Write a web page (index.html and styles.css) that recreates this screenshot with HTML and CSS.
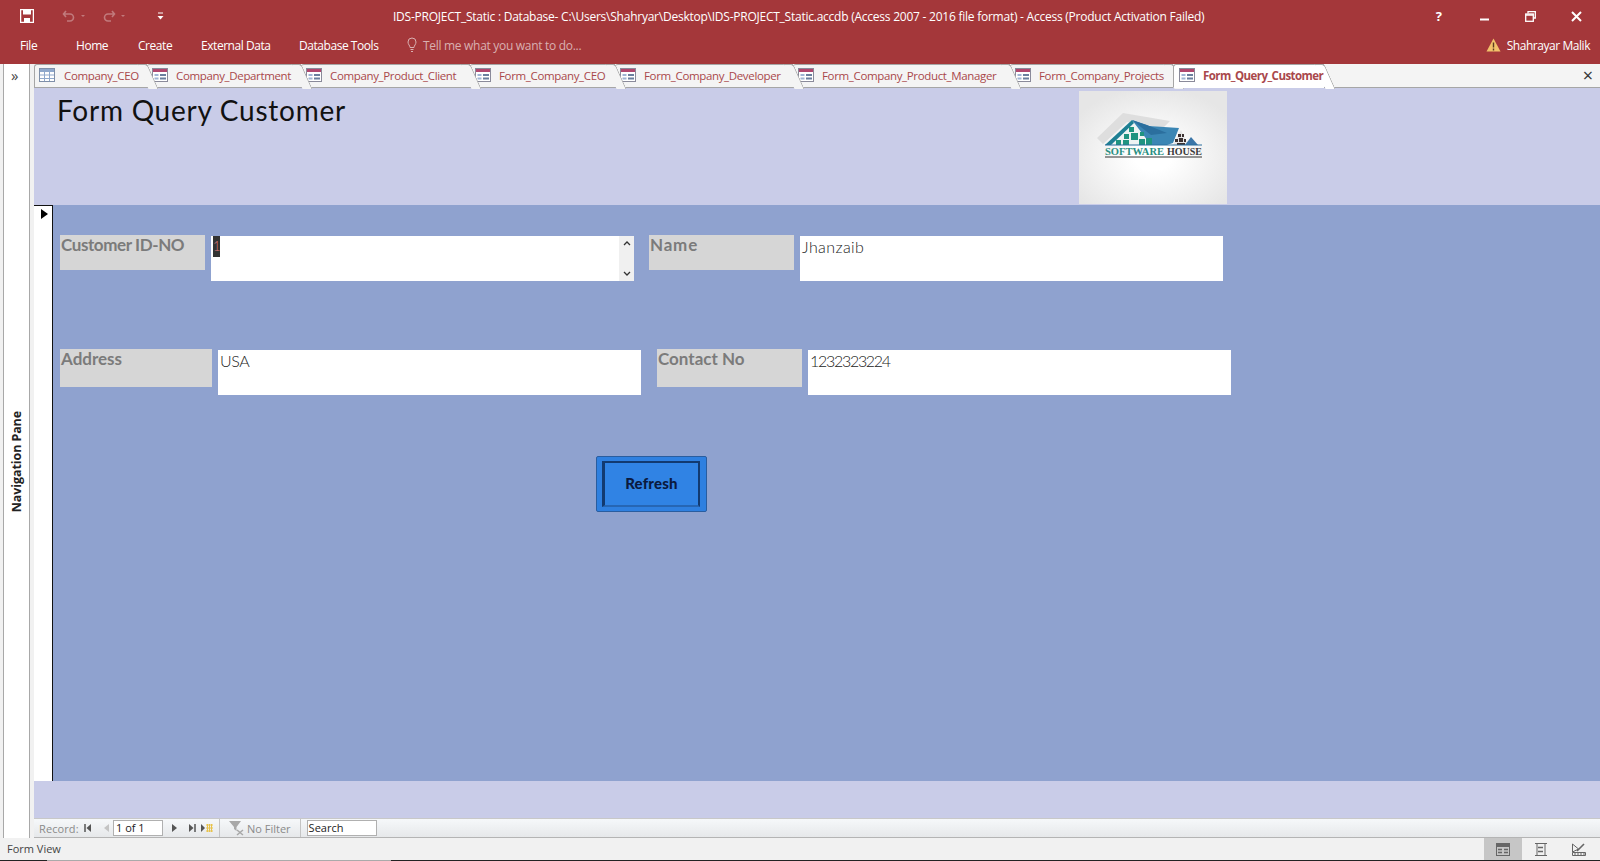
FILE: index.html
```html
<!DOCTYPE html>
<html lang="en">
<head>
<meta charset="utf-8">
<title>Form Query Customer</title>
<link rel="stylesheet" href="styles.css">
</head>
<body>
<svg class="defs" width="0" height="0" aria-hidden="true">
  <symbol id="i-form" viewBox="0 0 16 14">
    <rect x="0.5" y="0.5" width="15" height="13" fill="#fff" stroke="#8a8a9a"/>
    <rect x="1" y="1" width="14" height="3" fill="#b0476e"/>
    <rect x="2.5" y="6" width="4" height="2" fill="#9fb4d4"/>
    <rect x="2.5" y="9.5" width="4" height="2" fill="#9fb4d4"/>
    <rect x="8" y="6" width="6" height="2" fill="#6b7f9e"/>
    <rect x="8" y="9.5" width="6" height="2" fill="#6b7f9e"/>
  </symbol>
  <symbol id="i-table" viewBox="0 0 16 14">
    <rect x="0.5" y="0.5" width="15" height="13" fill="#fff" stroke="#7f8fa8"/>
    <rect x="1" y="1" width="14" height="3" fill="#8fa8cc"/>
    <path d="M1 7h14M1 10.500h14M5.500 1v12M10.500 1v12" stroke="#8fa8cc" fill="none"/>
  </symbol>
</svg>

<header class="ribbon">
  <div class="title-row">
    <div class="qat">
      <svg class="save" width="14" height="14" viewBox="0 0 14 14"><path d="M0.500 0.500h13v13h-13z" fill="none" stroke="#fff" stroke-width="1.500"/><rect x="3" y="1" width="8" height="4.500" fill="#fff"/><rect x="4" y="9" width="6" height="4.500" fill="#fff"/></svg>
      <svg class="undo" width="14" height="12" viewBox="0 0 14 12"><path d="M4 1 1.500 4 4 7M2 4h6a3.500 3.500 0 0 1 0 7H5" fill="none" stroke="#c17a7c" stroke-width="1.600"/></svg>
      <span class="tiny-caret"></span>
      <svg class="redo" width="14" height="12" viewBox="0 0 14 12"><path d="M10 1l2.500 3L10 7M12 4H6a3.500 3.500 0 0 0 0 7h3" fill="none" stroke="#c17a7c" stroke-width="1.600"/></svg>
      <span class="tiny-caret"></span>
      <svg class="qat-more" width="7" height="8" viewBox="0 0 7 8"><path d="M1 1h5" stroke="#fff"/><path d="M0.500 4h6L3.500 7.500z" fill="#fff"/></svg>
    </div>
    <div class="doc-title">IDS-PROJECT_Static : Database- C:\Users\Shahryar\Desktop\IDS-PROJECT_Static.accdb (Access 2007 - 2016 file format) - Access (Product Activation Failed)</div>
    <div class="win-controls">
      <span class="help">?</span>
      <svg width="10" height="10" viewBox="0 0 10 10"><path d="M0 8.500h9" stroke="#fff" stroke-width="2"/></svg>
      <svg class="win-restore" width="11" height="11" viewBox="0 0 11 11"><path d="M3 2.500V.7h7.300V7H8.500" fill="none" stroke="#fff" stroke-width="1.300"/><rect x="0.700" y="3" width="7.600" height="7.300" fill="none" stroke="#fff" stroke-width="1.300"/><path d="M1 4h7" stroke="#fff" stroke-width="1.500"/></svg>
      <svg class="win-close" width="11" height="11" viewBox="0 0 11 11"><path d="M1 1l9 9M10 1l-9 9" stroke="#fff" stroke-width="2"/></svg>
    </div>
  </div>
  <nav class="menu-row">
    <span class="file">File</span>
    <span class="menu-home">Home</span>
    <span class="menu-item">Create</span>
    <span class="menu-item">External Data</span>
    <span class="menu-item">Database Tools</span>
    <svg class="bulb" width="10" height="16" viewBox="0 0 10 16"><path d="M3 10.500C3 8.500 1 7.500 1 5a4 4 0 0 1 8 0c0 2.500-2 3.500-2 5.500z M3.500 12.500h3M4 14.500h2" fill="none" stroke="#d9b0b1" stroke-width="1"/></svg>
    <span class="tell">Tell me what you want to do...</span>
    <span class="user">
      <svg width="15" height="14" viewBox="0 0 15 14"><path d="M7.500 0.500 14.500 13.500H.5z" fill="#f2c26b"/><path d="M7.500 4.500v5M7.500 10.500v2" stroke="#5a3a20" stroke-width="1.400"/></svg>
      Shahrayar Malik
    </span>
  </nav>
</header>

<div class="workspace">
  <aside class="nav-pane">
    <div class="nav-inner">
      <span class="nav-chev">»</span>
      <span class="nav-label">Navigation Pane</span>
    </div>
  </aside>
  <main class="doc">
    <div class="tabs">
      <div class="tab w1"><svg class="tab-ico"><use href="#i-table"/></svg>Company_CEO</div>
      <div class="tab w2"><svg class="tab-ico"><use href="#i-form"/></svg>Company_Department</div>
      <div class="tab w3"><svg class="tab-ico"><use href="#i-form"/></svg>Company_Product_Client</div>
      <div class="tab w4"><svg class="tab-ico"><use href="#i-form"/></svg>Form_Company_CEO</div>
      <div class="tab w5"><svg class="tab-ico"><use href="#i-form"/></svg>Form_Company_Developer</div>
      <div class="tab w6"><svg class="tab-ico"><use href="#i-form"/></svg>Form_Company_Product_Manager</div>
      <div class="tab w7"><svg class="tab-ico"><use href="#i-form"/></svg>Form_Company_Projects</div>
      <div class="tab w8 active"><svg class="tab-ico"><use href="#i-form"/></svg>Form_Query_Customer</div>
      <span class="tab-close">×</span>
    </div>

    <section class="form-header">
      <h1>Form Query Customer</h1>
      <svg class="logo" width="148" height="113" viewBox="0 0 148 113">
        <defs>
          <radialGradient id="logo-bg" cx="50%" cy="58%" r="62%">
            <stop offset="0.200" stop-color="#ffffff"/>
            <stop offset="1" stop-color="#e6e6e6"/>
          </radialGradient>
        </defs>
        <rect width="148" height="113" fill="url(#logo-bg)"/>
        <path d="M18 47 44 22 91 30 84 37 48 31 24 53z" fill="#dedede"/>
        <path d="M26 54 53 29 84 54z" fill="#eef3f3"/>
        <path d="M53 29 70 35 100 37 94 52 88 54 72 54z" fill="#3b86b4"/>
        <path d="M53 29 68 34 88 42 72 44z" fill="#2b6f9e"/>
        <path d="M26 54 53 29 55 32 32 54z" fill="#1e7f93"/>
        <g fill="#1f9480">
          <rect x="50" y="36" width="5" height="5"/><rect x="45" y="43" width="5" height="5"/><rect x="52" y="42" width="7" height="7"/>
          <rect x="61" y="41" width="4" height="4"/><rect x="37" y="49" width="5" height="5"/><rect x="44" y="49" width="6" height="5"/>
          <rect x="60" y="48" width="6" height="6"/><rect x="67" y="47" width="6" height="7"/>
        </g>
        <path d="M94 54 102 39 109 54z" fill="#e6e6e6"/>
        <g fill="#3c3232">
          <rect x="99" y="43" width="3" height="3"/><rect x="103" y="43" width="2" height="3"/><rect x="96" y="48" width="3" height="3"/>
          <rect x="100" y="47" width="4" height="4"/><rect x="105" y="48" width="2" height="3"/><rect x="98" y="52" width="8" height="2"/>
        </g>
        <path d="M106 54 112 46 119 54z" fill="#3b76a8"/>
        <path d="M26 54H123" stroke="#2b6f9e"/>
        <text class="logo-a" x="26" y="64" textLength="59" lengthAdjust="spacingAndGlyphs">SOFTWARE</text>
        <text class="logo-b" x="88" y="64" textLength="35" lengthAdjust="spacingAndGlyphs">HOUSE</text>
        <path d="M26 66H123" stroke="#333" stroke-width="1"/>
      </svg>
    </section>

    <section class="detail">
      <div class="selector"><span class="selector-arrow"></span></div>
      <div class="detail-body">
        <div class="field-row row-a">
          <label class="cap cap-a cap-id">Customer ID-NO</label>
          <div class="box box-id">
            <span class="sel">1</span>
            <span class="scroll">
              <svg width="8" height="5" viewBox="0 0 8 5"><path d="M1 4l3-3 3 3" fill="none" stroke="#333" stroke-width="1.300"/></svg>
              <svg width="8" height="5" viewBox="0 0 8 5"><path d="M1 1l3 3 3-3" fill="none" stroke="#333" stroke-width="1.300"/></svg>
            </span>
          </div>
          <label class="cap cap-a name-cap cap-name">Name</label>
          <div class="box box-name">Jhanzaib</div>
        </div>
        <div class="field-row row-b">
          <label class="cap cap-b">Address</label>
          <div class="box box-usa">USA</div>
          <label class="cap cap-a name-cap">Contact No</label>
          <div class="box box-num">1232323224</div>
        </div>
        <button class="refresh" type="button"><span>Refresh</span></button>
      </div>
    </section>

    <section class="form-footer"></section>

    <div class="recnav">
      <span class="rec-label">Record:</span>
      <svg class="r-first" width="8" height="8" viewBox="0 0 8 8"><path d="M1 0v8" stroke="#555" stroke-width="1.500"/><path d="M7 0v8L2.500 4z" fill="#555"/></svg>
      <svg class="r-prev" width="5" height="8" viewBox="0 0 5 8"><path d="M5 0v8L0 4z" fill="#c4c4c4"/></svg>
      <span class="rec-input">1 of 1</span>
      <svg class="r-next" width="5" height="8" viewBox="0 0 5 8"><path d="M0 0v8l5-4z" fill="#555"/></svg>
      <svg class="r-last" width="8" height="8" viewBox="0 0 8 8"><path d="M1 0v8l4.500-4z" fill="#555"/><path d="M7 0v8" stroke="#555" stroke-width="1.500"/></svg>
      <svg class="r-new" width="12" height="8" viewBox="0 0 12 8"><path d="M0 0v8l4-4z" fill="#555"/><path d="M5 1h7M5 4h7M5 7h7M6.500 0v8M8.500 0v8M10.500 0v8" stroke="#e8c24a" stroke-width="1"/></svg>
      <span class="rec-sep sep-a"></span>
      <svg class="r-filter" width="16" height="15" viewBox="0 0 16 15"><path d="M0 0h12L7.500 6v4L5 8V6z" fill="#a8a8a8"/><path d="M8 9l6 5M14 9l-6 5" stroke="#a8a8a8" stroke-width="1.500"/></svg>
      <span class="no-filter">No Filter</span>
      <span class="rec-sep sep-b"></span>
      <span class="rec-search">Search</span>
    </div>
  </main>
</div>

<footer class="status">
  <span>Form View</span>
  <div class="views">
    <span class="view on"><svg width="14" height="13" viewBox="0 0 14 13"><rect x="0.500" y="0.500" width="13" height="12" fill="none" stroke="#666"/><rect x="1" y="1" width="12" height="3" fill="#666"/><path d="M2 6.500h4M8 6.500h4M2 9.500h4M8 9.500h4" stroke="#666" stroke-width="1.500"/></svg></span>
    <span class="view"><svg width="12" height="13" viewBox="0 0 12 13"><path d="M0 .5h12M0 12.500h12M2 .5v12M10 .5v12" stroke="#666" fill="none"/><path d="M3 4.500h5M3 8.500h5" stroke="#666" stroke-width="1.600"/></svg></span>
    <span class="view"><svg width="14" height="13" viewBox="0 0 14 13"><path d="M0.500 1v8l6-3z" fill="none" stroke="#666"/><path d="M5 8l7-7" stroke="#666" stroke-width="1.600"/><path d="M.5 9.500h13v3H.5zM3 10v2M6 10v2M9 10v2M12 10v2" fill="none" stroke="#666"/></svg></span>
  </div>
</footer>
</body>
</html>
```

FILE: styles.css
```css
* { box-sizing: border-box; }
html, body { height: 100%; }
body {
  margin: 0;
  height: 861px;
  overflow: hidden;
  display: flex;
  flex-direction: column;
  font-family: "Open Sans", "Liberation Sans", sans-serif;
  background: #f1f1f1;
}
.defs { position: absolute; }

/* ribbon */
.ribbon { height: 64px; flex: none; background: #a4373a; color: #fff; font-size: 12px; }
.title-row { height: 32px; display: flex; align-items: center; }
.qat { width: 393px; flex: none; display: flex; align-items: center; padding-left: 20px; }
.undo { margin-left: 28px; }
.redo { margin-left: 17px; }
.tiny-caret { width: 0; height: 0; margin-left: 5px; border: 2.500px solid transparent; border-top-color: #c17a7c; border-bottom: 0; }
.qat-more { margin-left: 32px; }
.doc-title { font-size: 12px; letter-spacing: -0.240px; white-space: nowrap; width: 830px; }
.win-controls { margin-left: auto; display: flex; align-items: center; gap: 36px; padding-right: 18px; }
.help { font-weight: 700; font-size: 13px; margin-right: 2px; }
.win-restore { margin-left: -1px; }
.win-close { margin-left: -1px; }
.menu-row { height: 32px; display: flex; align-items: center; padding: 0 10px 0 20px; position: relative; top: -3px; letter-spacing: -0.450px; }
.file { width: 56px; }
.menu-home { width: 62px; }
.menu-item:nth-of-type(3) { width: 63px; }
.menu-item:nth-of-type(4) { width: 98px; }
.menu-item:nth-of-type(5) { width: 108px; }
.bulb { flex: none; margin-right: 6px; }
.tell { color: #d9b0b1; letter-spacing: -0.300px; }
.user { margin-left: auto; display: flex; align-items: center; gap: 6px; }

/* workspace */
.workspace { flex: 1; display: flex; min-height: 0; }
.nav-pane { width: 34px; flex: none; padding-left: 3px; background: #f1f1f1; }
.nav-inner {
  width: 27px;
  height: 100%;
  background: #fff;
  border-left: 1px solid #a8a8a8;
  border-right: 1px solid #a8a8a8;
  position: relative;
  display: flex;
  justify-content: center;
  align-items: center;
  padding-top: 21px;
}
.nav-chev { position: absolute; top: 3px; left: 7px; font-size: 15px; line-height: 16px; color: #444; }
.nav-label { writing-mode: vertical-rl; transform: rotate(180deg); font-weight: 700; font-size: 12.500px; letter-spacing: -0.100px; color: #222; }
.doc { flex: 1; min-width: 0; display: flex; flex-direction: column; }

/* tabs */
.tabs { height: 24px; flex: none; display: flex; background: #f4f4f4; border-bottom: 1px solid #a6a6a6; position: relative; }
.tab { height: 24px; display: flex; align-items: center; padding: 0 0 2px 5px; gap: 8px; color: #a9484b; font-size: 11.500px; letter-spacing: -0.350px; white-space: nowrap; position: relative; background: #f4f4f4; border-top: 1px solid #a6a6a6; border-radius: 3px 0 0 0; border-bottom: 1px solid #a6a6a6; }
.tab::after { content: ""; position: absolute; top: -1px; right: -6px; width: 9px; height: 24px; border-right: 1px solid #a6a6a6; border-top: 1px solid #a6a6a6; transform: skewX(24deg); background: #f4f4f4; z-index: -1; border-radius: 0 3px 0 0; }
.tab.active { font-weight: 700; letter-spacing: -0.550px; background: #fff; border-bottom-color: #fff; border-left: 1px solid #a6a6a6; z-index: 9; }
.tab.active::after { background: #fff; }
.tab-ico { width: 16px; height: 14px; flex: none; }
.w1 { width: 113px; border-left: 1px solid #a6a6a6; z-index: 8; padding-left: 4px; gap: 9px; }
.w2 { width: 154px; z-index: 7; }
.w3 { width: 169px; z-index: 6; }
.w4 { width: 145px; z-index: 5; }
.w5 { width: 178px; z-index: 4; }
.w6 { width: 217px; z-index: 3; }
.w7 { width: 163px; z-index: 2; }
.w8 { width: 151px; }
.tab-close { position: absolute; right: 7px; top: 0; font-size: 18px; line-height: 22px; color: #333; }

/* form */
.form-header { height: 117px; flex: none; background: #c9cce8; display: flex; align-items: flex-start; padding: 3px 0 0 23px; }
.form-header h1 { margin: 0; width: 1022px; flex: none; font-family: "Lato", sans-serif; font-weight: 400; font-size: 28px; line-height: 38px; letter-spacing: 0.750px; color: #111; }
.logo { flex: none; display: block; }
.logo-a, .logo-b { font-family: "Liberation Serif", serif; font-weight: 700; font-size: 11px; }
.logo-a { fill: #2a8f82; }
.logo-b { fill: #3b3b3b; }

.detail { height: 576px; flex: none; display: flex; background: #8fa2cf; }
.selector { width: 19px; flex: none; background: #fff; border-top: 1px solid #111; border-right: 1px solid #111; padding: 3px 0 0 7px; }
.selector-arrow { display: block; width: 0; height: 0; border-left: 7px solid #000; border-top: 5px solid transparent; border-bottom: 5px solid transparent; }
.detail-body { flex: 1; padding: 30px 0 0 7px; }
.field-row { display: flex; align-items: flex-start; }
.row-a { height: 114px; }
.row-b { height: 107px; }
.cap { background: #d6d6d6; color: #7b7b7b; font-family: "Lato", sans-serif; font-weight: 700; font-size: 17px; line-height: 20px; padding: 0 1px; flex: none; }
.cap-a { width: 145px; height: 35px; }
.cap-id { letter-spacing: -0.400px; }
.cap-name { letter-spacing: 0.800px; }
.row-b .cap { height: 38px; }
.cap-b { width: 152px; }
.name-cap { margin-left: 16px; }
.box { width: 423px; height: 45px; flex: none; margin: 1px 0 0 6px; background: #fff; color: #222; font-family: "Lato", sans-serif; font-weight: 300; font-size: 16px; line-height: 22px; padding: 0 2px; position: relative; }
.box-name { letter-spacing: 0.400px; }
.box-usa { letter-spacing: -0.400px; }
.box-num { letter-spacing: -1.300px; }
.row-a .box + .cap { margin-left: 15px; }
.sel { display: inline-block; width: 7px; height: 21px; background: #333; color: #d77; font-size: 13px; line-height: 21px; overflow: hidden; vertical-align: top; }
.scroll { position: absolute; top: 0; right: 0; width: 15px; height: 100%; background: #f0f0f0; display: flex; flex-direction: column; justify-content: space-between; align-items: center; padding: 5px 0; }
.refresh { display: block; margin: 0 0 0 536px; width: 111px; height: 56px; padding: 4px 6px 4px 5px; background: #2f80e0; border: 1px solid #2a5d9f; border-radius: 2px; cursor: default; }
.refresh span { display: flex; align-items: center; justify-content: center; height: 100%; padding-bottom: 2px; border: 2px solid #123a70; border-left-width: 3px; border-bottom-color: #2666b4; background: #3083e4; color: #0a1a40; font-family: "Lato", sans-serif; font-weight: 900; font-size: 15px; letter-spacing: 0.200px; }
.form-footer { height: 37px; flex: none; background: #c9cce8; }

/* record navigator */
.recnav { height: 20px; flex: none; display: flex; align-items: center; background: linear-gradient(#f6f8fa, #e6e8ea); color: #8a8a8a; font-size: 11px; padding-left: 5px; border-top: 1px solid #c8c8c8; border-bottom: 1px solid #b4b4b4; }
.rec-label { width: 45px; letter-spacing: 0.100px; }
.r-prev { margin: 0 4px 0 12px; }
.rec-input, .rec-search { background: #fff; border: 1px solid #b0b0b0; color: #222; height: 16px; line-height: 14px; padding-left: 2px; }
.rec-input { width: 50px; margin-left: 0; }
.r-next { margin-left: 9px; }
.r-last { margin-left: 11px; }
.r-new { margin-left: 5px; }
.rec-sep { width: 1px; height: 18px; background: #c4c4c4; }
.sep-a { margin-left: 6px; }
.r-filter { margin-left: 9px; }
.no-filter { margin-left: 2px; }
.sep-b { margin-left: 9px; }
.rec-search { width: 70px; margin-left: 6px; padding-left: 1px; }

/* status */
.status { height: 23px; flex: none; display: flex; align-items: center; justify-content: space-between; background: #f1f1f1; color: #444; font-size: 11px; padding: 0 0 0 7px; border-bottom: 1px solid #222; border-image: linear-gradient(90deg, #222 48px, #aaa 48px, #aaa 392px, #222 392px) 1; }
.status > span:first-child { margin-bottom: 2px; }
.views { display: flex; height: 100%; padding-right: 2px; }
.view { width: 38px; display: flex; align-items: center; justify-content: center; }
.view.on { background: #c6c6c6; }
```
